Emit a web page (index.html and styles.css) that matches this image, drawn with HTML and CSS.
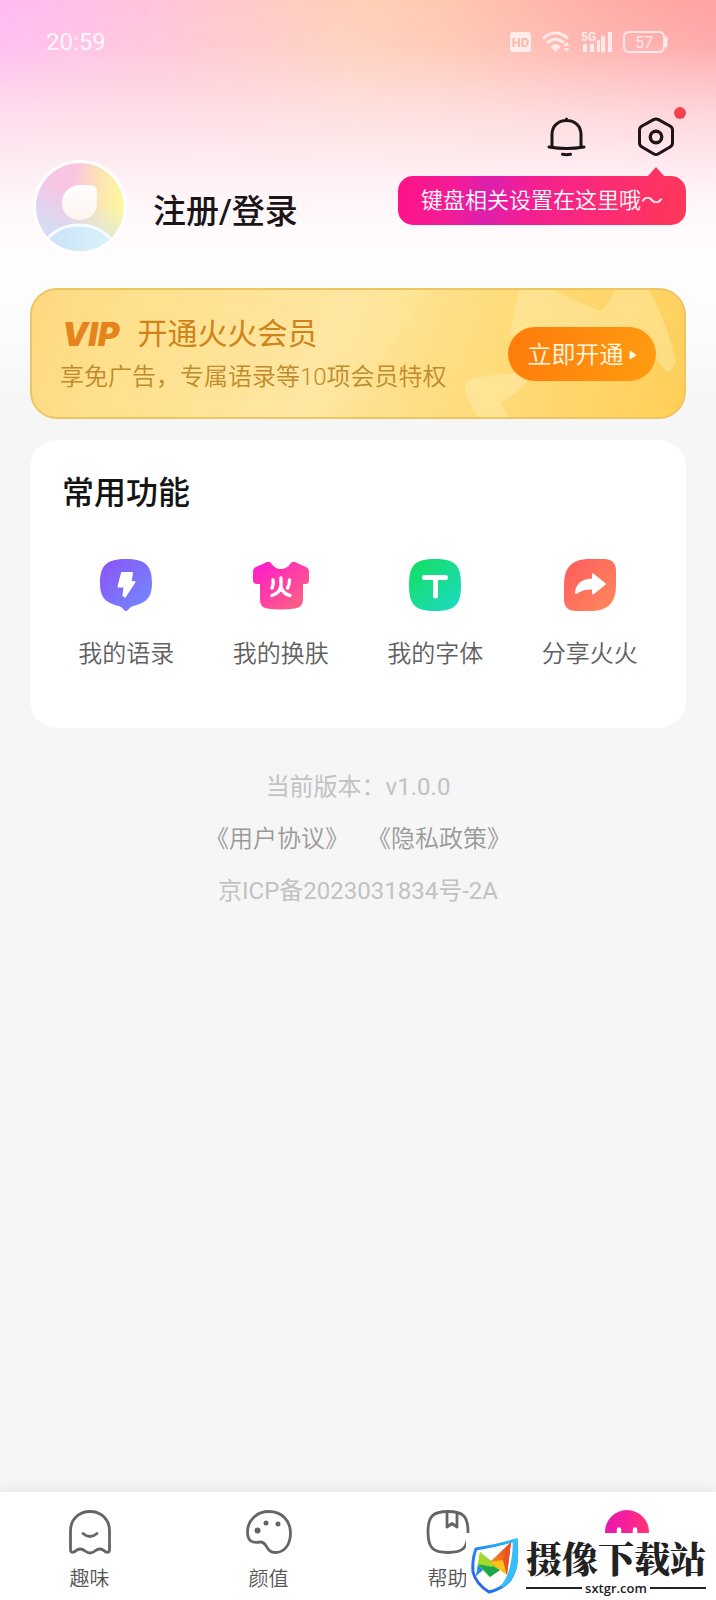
FILE: index.html
```html
<!DOCTYPE html>
<html lang="zh-CN">
<head>
<meta charset="utf-8">
<meta name="viewport" content="width=device-width, initial-scale=1">
<title>我的</title>
<link rel="stylesheet" href="styles.css">
</head>
<body>
<div class="page">
  <div class="status">
    <span class="status-time">20:59</span>
    <div class="status-icons">
      <svg width="21" height="20" viewBox="0 0 21 20"><rect y="0" width="21" height="20" rx="3" fill="#fff"/><text x="10.500" y="15" text-anchor="middle" class="hd-text">HD</text></svg>
      <svg width="28" height="22" viewBox="0 0 28 22" fill="none" stroke="#fff" stroke-width="3"><path d="M1 7.500Q13.500-3.500 26 7.500M5 12Q13.500 4.500 22 12"/><path d="M8.500 15.500Q13.500 11 18.500 15.500L13.500 21Z" fill="#fff" stroke="none"/><path d="M24.500 11l3 4h-6zM24.500 21l3-4h-6z" fill="#fff" stroke="none"/></svg>
      <svg width="31" height="22" viewBox="0 0 31 22" fill="#fff"><text x="0" y="10" class="net-text">5G</text><path d="M2 13h4v8H2zM9 13h4v8H9zM16 9h3v12h-3zM20 5h4v16h-4zM27 1h4v20h-4z"/></svg>
      <svg width="45" height="22" viewBox="0 0 45 22" fill="none" stroke="#fff" stroke-width="2"><rect x="1" y="1" width="40" height="20" rx="5"/><path d="M43 7v8" stroke-width="3" stroke-linecap="round"/><text x="21" y="17" text-anchor="middle" class="battery-text">57</text></svg>
    </div>
  </div>

  <header class="head">
    <div class="tools">
      <button class="tool" aria-label="消息">
        <svg width="44" height="44" viewBox="0 0 44 44" fill="none" stroke="#1b1517" stroke-width="3" stroke-linecap="round" stroke-linejoin="round"><path d="M8 32V19.500C8 11 14 5.500 22.500 5.500S37 11 37 19.500V32M5 32Q22.500 35 40 32M22.500 4v1.500M18.500 39.300q4 .8 8 0"/></svg>
      </button>
      <button class="tool" aria-label="设置">
        <svg width="44" height="44" viewBox="0 0 44 44" fill="none" stroke="#1b1517" stroke-width="3" stroke-linejoin="round"><path d="M19.500 4.600Q22 3.300 24.500 4.600L36 11Q38.500 12.500 38.500 15V28Q38.500 30.500 36 32L24.500 38.700Q22 40.200 19.500 38.700L8 32Q5.500 30.500 5.500 28V15Q5.500 12.500 8 11Z"/><circle cx="22" cy="22" r="5.700" stroke-width="3.400"/></svg>
        <span class="dot"></span>
      </button>
      <div class="tip" role="status">键盘相关设置在这里哦～</div>
    </div>
    <div class="profile">
      <svg class="avatar" viewBox="0 0 94 94" role="img" aria-label="头像">
        <defs>
          <linearGradient id="av" x1="0" y1="0" x2="1" y2="0.150"><stop offset="0" stop-color="#f3c4e8"/><stop offset=".45" stop-color="#fac5e0"/><stop offset=".72" stop-color="#fde3b4"/><stop offset="1" stop-color="#fcf7a0"/></linearGradient>
          <linearGradient id="av2" x1=".6" y1=".2" x2=".3" y2="1"><stop offset=".2" stop-color="#cfe4f8" stop-opacity="0"/><stop offset=".8" stop-color="#cfe2f8" stop-opacity=".85"/></linearGradient>
          <linearGradient id="av3" x1="0" y1="0" x2="1" y2="0"><stop offset="0" stop-color="#c9e2f8"/><stop offset="1" stop-color="#daf4fa"/></linearGradient>
          <linearGradient id="face" x1="0" y1="0" x2="0" y2="1"><stop offset="0" stop-color="#fffdfd"/><stop offset="1" stop-color="#fcf3ef"/></linearGradient>
          <clipPath id="avclip"><circle cx="47" cy="47" r="44"/></clipPath>
        </defs>
        <circle cx="47" cy="47" r="47" fill="#fff"/>
        <g clip-path="url(#avclip)"><circle cx="47" cy="47" r="45" fill="url(#av)"/><circle cx="47" cy="47" r="45" fill="url(#av2)"/><ellipse cx="46" cy="94" rx="37" ry="29" fill="url(#av3)" stroke="#f7fbfd" stroke-width="3"/></g>
        <path d="M47 25H57Q64 25 64 32V43C64 53 57 60 46.500 60S29 53 29 43S36 25 47 25Z" fill="url(#face)"/>
      </svg>
      <a class="login" href="#login">注册/登录</a>
    </div>
  </header>

  <main class="main">
    <section class="vip">
      <svg class="vip-art" viewBox="0 0 656 131" preserveAspectRatio="xMaxYMid slice" aria-hidden="true">
        <path d="M300 131Q360 70 400 0H330Q230 100 200 131Z" fill="#fff3b0" opacity=".14"/>
        <path d="M490 0H520L569 22Q575 22 578 17L588 0H620Q640 35 648 75L640 85L600 40L480 48Z" fill="#ffedb0" opacity=".45"/>
        <path d="M437 93Q470 82 500 88Q500 98 472 115L480 131H450Q432 106 437 93Z" fill="#ffedb0" opacity=".5"/>
      </svg>
      <div class="vip-copy">
        <h2 class="vip-title">
          <em class="vip-logo">VIP</em>
          <span>开通火火会员</span>
        </h2>
        <p class="vip-text">享免广告，专属语录等10项会员特权</p>
      </div>
      <button class="vip-btn"><span>立即开通</span><svg width="8" height="10" viewBox="0 0 8 10"><path d="M1 1L7 5L1 9Z" fill="#fffbe5" stroke="#fffbe5" stroke-linejoin="round"/></svg></button>
    </section>

    <section class="card">
      <h2 class="card-title">常用功能</h2>
      <div class="grid">
        <a class="cell" href="#quotes">
          <svg width="56" height="56" viewBox="0 0 56 56"><defs><linearGradient id="g1" x1="0" y1="0" x2="1" y2="1"><stop offset="0" stop-color="#8c52f5"/><stop offset="1" stop-color="#6f8dff"/></linearGradient></defs><path d="M28 2C47 2 54 8 54 26C54 41 48 46 35 49Q32 50 30 53Q28 55 26 53Q24 50 21 49C8 46 2 41 2 26C2 8 9 2 28 2Z" fill="url(#g1)"/><path d="M24 16H34L32.500 25H36.500L27 39.500L25.500 38.500L26.500 29.500H20.500Z" fill="#fff" stroke="#fff" stroke-width="2" stroke-linejoin="round"/></svg>
          <span>我的语录</span>
        </a>
        <a class="cell" href="#skins">
          <svg width="56" height="56" viewBox="0 0 56 56"><defs><linearGradient id="g2" x1="0" y1="0" x2="1" y2="1"><stop offset=".1" stop-color="#ff1fc8"/><stop offset="1" stop-color="#ff6a78"/></linearGradient></defs><path d="M14 5Q16 4 18 6Q22 12 28 12T38 6Q40 4 42 5L53 10Q56 11 56 15V23Q56 27 53 27H50V43Q50 50 42 51.500Q28 53.500 14 51.500Q7 50 7 43V27H4Q0 27 0 23V15Q0 11 3 10Z" fill="url(#g2)"/><path d="M20 23Q21 27 19 31M36.500 23Q37 27 34.500 31M28 21V29Q27 36 19 38.500M28 30Q30 37 37 38.500" fill="none" stroke="#fff" stroke-width="3.400" stroke-linecap="round"/></svg>
          <span>我的换肤</span>
        </a>
        <a class="cell" href="#fonts">
          <svg width="56" height="56" viewBox="0 0 56 56"><defs><linearGradient id="g3" x1="0" y1="0" x2="1" y2="1"><stop offset=".1" stop-color="#13df66"/><stop offset="1" stop-color="#1fd9c8"/></linearGradient></defs><path d="M28 2C48 2 54 8 54 28S48 54 28 54S2 48 2 28S8 2 28 2Z" fill="url(#g3)"/><path d="M17.500 20.500H38.500M28.500 21V39" fill="none" stroke="#fff" stroke-width="5" stroke-linecap="round"/></svg>
          <span>我的字体</span>
        </a>
        <a class="cell" href="#share">
          <svg width="56" height="56" viewBox="0 0 56 56"><defs><linearGradient id="g4" x1="0" y1="0" x2="1" y2="1"><stop offset="0" stop-color="#ff5a5f"/><stop offset="1" stop-color="#ff8a5a"/></linearGradient></defs><path d="M28 2H42Q54 2 54 14V28C54 46 46 54 28 54H14Q2 54 2 42V28C2 10 10 2 28 2Z" fill="url(#g4)"/><path d="M31 17.500L43 27L31 36.500V31.500Q21 31 14 36Q15 23 31 22.500Z" fill="#fff" stroke="#fff" stroke-width="2" stroke-linejoin="round"/></svg>
          <span>分享火火</span>
        </a>
      </div>
    </section>

    <footer class="legal">
      <p>当前版本：v1.0.0</p>
      <p class="links"><a href="#terms">《用户协议》</a><a href="#privacy">《隐私政策》</a></p>
      <p>京ICP备2023031834号-2A</p>
    </footer>
  </main>

  <nav class="nav">
    <a class="nav-item" href="#fun">
      <svg width="46" height="46" viewBox="0 0 46 46" fill="none" stroke="#656565" stroke-width="2.800" stroke-linecap="round" stroke-linejoin="round"><path d="M3.500 22C3.500 10 12 2.500 23 2.500S42.500 10 42.500 22V41Q42.500 44 39 43L36 41Q32 38.500 28 42Q23 46 18 42Q14 38.500 10 41L7 43Q3.500 44 3.500 41Z"/><path d="M16 24.500Q23 30.500 30 24.500"/></svg>
      <span>趣味</span>
    </a>
    <a class="nav-item" href="#looks">
      <svg width="46" height="46" viewBox="0 0 46 46" fill="none" stroke="#656565" stroke-width="2.800"><path d="M23 2.500C36 2.500 44.500 12 44.500 24C44.500 36 38 43.500 29.500 43.500C19 43.500 22 32.500 14 33C7 34 1.500 33 1.500 23C1.500 11 11 2.500 23 2.500Z"/><g fill="#656565" stroke="none"><circle cx="11.500" cy="21.500" r="3"/><circle cx="20" cy="14" r="2.500"/><circle cx="32" cy="15" r="2.500"/></g></svg>
      <span>颜值</span>
    </a>
    <a class="nav-item" href="#help">
      <svg width="46" height="46" viewBox="0 0 46 46" fill="none" stroke="#656565" stroke-width="2.800" stroke-linejoin="round"><path d="M23 2.500C38 2.500 43 7 43 23S38 43.500 23 43.500S3 39 3 23S8 2.500 23 2.500Z"/><path d="M22 3V18L27 14.500L32 18V4"/></svg>
      <span>帮助</span>
    </a>
    <a class="nav-item" href="#me" aria-label="个人中心" aria-current="page">
      <svg width="46" height="46" viewBox="0 0 46 46"><defs><linearGradient id="g5" x1="0" y1="0" x2="1" y2="0"><stop offset="0" stop-color="#e61aae"/><stop offset=".5" stop-color="#f6209a"/><stop offset="1" stop-color="#ff3572"/></linearGradient></defs><circle cx="23" cy="23" r="22" fill="url(#g5)"/><path d="M15 20.500V27M31 20.500V27" stroke="#fff" stroke-width="4.500" stroke-linecap="round"/></svg>
    </a>
    <div class="mark">
      <svg width="50" height="58" viewBox="0 0 50 58">
        <defs><linearGradient id="sh" x1="1" y1="0" x2="0" y2="1"><stop offset="0" stop-color="#28c3fb"/><stop offset="1" stop-color="#2457ef"/></linearGradient><linearGradient id="or" x1="1" y1="0" x2="0" y2="1"><stop offset="0" stop-color="#e53a20"/><stop offset="1" stop-color="#ffa51c"/></linearGradient></defs>
        <path d="M6 12Q26 9 46 3Q49 30 40 43Q32 52 19 55Q6 47 3 35Q2 22 6 12Z" fill="#fff" stroke="url(#sh)" stroke-width="3"/>
        <path d="M48 2V24Q47 41 33 50L30 49Q42 38 43 4Z" fill="#37bdf8"/>
        <path d="M10 15L6 39L13 33L20 40L30 33Z" fill="#8bcf35"/><path d="M6 39L8 28L13 33Z" fill="#258ce9"/><path d="M8 27L22 29L30 33L20 40Z" fill="#1fa44f"/><path d="M10 15L24 26L22 30L8 27Z" fill="#a4d92f"/>
        <path d="M41 5L20 25L37 38Z" fill="url(#or)"/><path d="M20 25L33 23L37 38Z" fill="#ffc21c"/><path d="M33 23L41 5L37 38Z" fill="#ee5024"/>
      </svg>
      <div class="mark-copy">
        <strong>摄像下载站</strong>
        <span class="mark-url">sxtgr.com</span>
      </div>
    </div>
  </nav>
</div>
</body>
</html>
```
FILE: styles.css
```css
* { box-sizing: border-box; margin: 0; padding: 0; }

body {
  font-family: Roboto, "Noto Sans CJK SC", sans-serif;
  font-size: 24px;
  font-weight: 350;
  line-height: 36px;
  background: #f6f6f6;
}

a { color: inherit; text-decoration: none; }
button { border: 0; background: none; font: inherit; cursor: pointer; }
svg { display: block; flex: none; }

.page {
  position: relative;
  display: flex;
  flex-direction: column;
  min-height: 100vh;
  background:
    linear-gradient(180deg, rgba(254,224,232,0) 0, rgba(254,224,232,.15) 45px, rgba(254,226,232,.5) 80px, rgba(254,230,236,.78) 115px, rgba(254,238,243,.93) 160px, #fff6f9 200px, #fffcfd 250px, #fdfdfd 300px, #f6f6f6 400px),
    linear-gradient(90deg, #ffbbf2 0, #ffc2e2 16%, #ffc8ce 30%, #ffd0b8 50%, #ffc8b0 62%, #ffb0a8 82%, #ffa2a3 100%);
}

.status {
  display: flex;
  align-items: center;
  justify-content: space-between;
  height: 84px;
  padding: 0 48px 0 46px;
  color: #fff;
  opacity: .85;
}
.status-time { font-weight: 400; }
.status-icons { display: flex; align-items: center; gap: 11px; opacity: .85; }
.hd-text { font: 700 13px Roboto, sans-serif; fill: #fbb5ab; }
.net-text { font: 700 12px Roboto, sans-serif; }
.battery-text { font: 400 16px Roboto, sans-serif; fill: #fff; stroke: none; }

.head { padding: 31px 30px 0 33px; }
.tools { position: relative; display: flex; justify-content: flex-end; gap: 46px; padding-right: 8px; }
.tool { position: relative; width: 44px; height: 44px; }
.dot { position: absolute; top: -8px; right: -8px; width: 12px; height: 12px; border-radius: 50%; background: #f54450; }
.tip {
  position: absolute;
  top: 61px;
  right: 0;
  padding: 7px 23px 6px;
  border-radius: 15px;
  color: #fff;
  font-size: 22px;
  white-space: nowrap;
  background: linear-gradient(100deg, #ff1287 0, #f41c98 20%, #dc1fae 31%, #f31f94 45%, #fc2a78 68%, #ff3857 100%);
}
.tip::before {
  content: "";
  position: absolute;
  right: 21px;
  top: -9px;
  border: solid transparent;
  border-width: 0 9px 10px;
  border-bottom-color: #ff3366;
}
.profile { display: flex; align-items: center; gap: 26px; margin-top: 1px; }
.avatar { width: 94px; height: 94px; }
.login { padding-top: 10px; font-size: 33px; font-weight: 500; color: #1b1517; }

.main { flex: 1; padding: 34px 30px 0; }

.vip {
  position: relative;
  display: flex;
  align-items: center;
  justify-content: space-between;
  overflow: hidden;
  height: 131px;
  padding: 0 30px;
  border-radius: 27px;
  border: 2px solid #edc661;
  background: linear-gradient(110deg, #ffd880 0, #ffe08c 14%, #fee6a0 45%, #ffdc7c 68%, #ffce58 100%);
}
.vip-art { position: absolute; inset: 0; width: 100%; height: 100%; }
.vip-copy { position: relative; padding-top: 2px; }
.vip-title { display: flex; align-items: center; gap: 18px; font-size: 30px; line-height: 44px; font-weight: 400; color: #cf8319; }
.vip-logo { font-family: Inter, sans-serif; font-size: 33px; font-weight: 900; color: #e5831c; }
.vip-text { color: #c18a2a; line-height: 42px; margin-left: -2px; }
.vip-btn {
  position: relative;
  display: flex;
  align-items: center;
  justify-content: center;
  gap: 5px;
  width: 148px;
  height: 54px;
  padding-top: 2px;
  margin-right: -2px;
  border-radius: 27px;
  color: #fffbe5;
  background: linear-gradient(100deg, #ff7b0c, #ff9c10);
}

.card { margin-top: 21px; padding: 30px 19px 56px; border-radius: 27px; background: #fff; }
.card-title { padding-left: 13px; font-size: 32px; line-height: 46px; font-weight: 500; color: #141414; }
.grid { display: grid; grid-template-columns: repeat(4, 1fr); margin-top: 41px; }
.cell { display: flex; flex-direction: column; align-items: center; gap: 23px; color: #606060; }

.legal { display: flex; flex-direction: column; align-items: center; gap: 16px; margin-top: 41px; font-weight: 400; color: #c2c2c2; }
.links { display: flex; gap: 18px; font-weight: 350; color: #999; }

.nav {
  position: relative;
  display: grid;
  grid-template-columns: repeat(4, 1fr);
  height: 108px;
  padding-top: 17px;
  background: #fff;
  box-shadow: 0 -2px 12px #e4e4e4;
}
.nav-item { display: flex; flex-direction: column; align-items: center; gap: 9px; font-size: 20px; line-height: 30px; color: #555; }
.mark {
  position: absolute;
  right: 0;
  bottom: 0;
  display: flex;
  gap: 6px;
  width: 250px;
  height: 67px;
  padding: 4px 10px 0 4px;
  background: #fff;
  color: #222;
}
.mark-copy { flex: 1; }
.mark strong { display: block; font-family: "Noto Serif CJK SC", "Noto Sans CJK SC", serif; font-size: 36px; line-height: 42px; font-weight: 900; white-space: nowrap; }
.mark-url { display: flex; align-items: center; gap: 3px; font: 600 13px/18px "Open Sans", sans-serif; }
.mark-url::before, .mark-url::after { content: ""; flex: 1; height: 2px; background: #222; }
```
